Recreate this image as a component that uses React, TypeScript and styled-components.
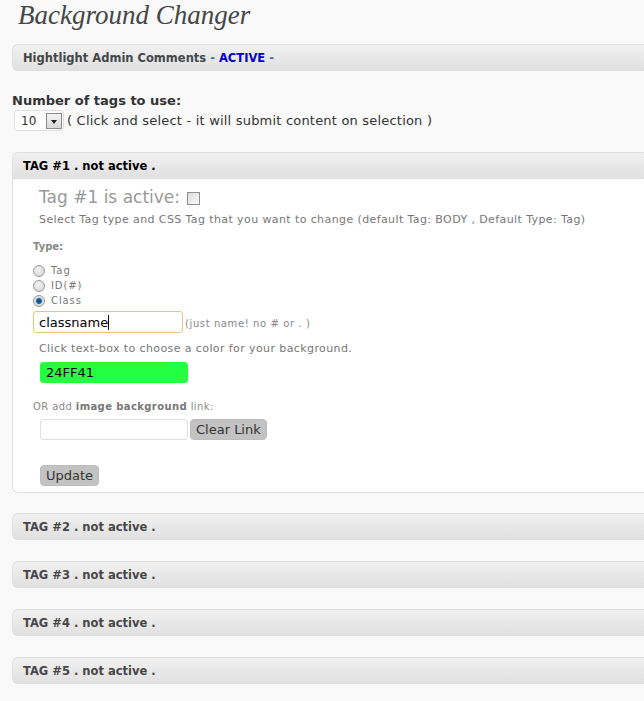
import React from "react";
import styled, { createGlobalStyle } from "styled-components";

const Global = createGlobalStyle`
  html, body { margin: 0; padding: 0; background: #f9f9f9; overflow: hidden; }
  body { font-family: "DejaVu Sans", Verdana, sans-serif; color: #333; }
`;

const Page = styled.div`
  padding: 0 0 0 12px;
  width: 660px;
`;

const Title = styled.h2`
  margin: 0;
  padding: 0 0 0 6px;
  height: 44px;
  box-sizing: border-box;
  font-family: "Liberation Serif", "Times New Roman", serif;
  font-style: italic;
  font-weight: normal;
  font-size: 27px;
  line-height: 30px;
  color: #464646;
`;

const Bar = styled.div<{ $open?: boolean }>`
  height: 27px;
  box-sizing: border-box;
  border: 1px solid #dfdfdf;
  border-right: none;
  border-radius: ${(p) => (p.$open ? "6px 0 0 0" : "6px 0 0 6px")};
  background: linear-gradient(to bottom, #f1f1f1, #e0e0e0);
  display: flex;
  align-items: center;
  padding-left: 10px;
  font-family: "DejaVu Sans", sans-serif;
  font-weight: bold;
  font-size: 11.5px;
  color: ${(p) => (p.$open ? "#000" : "#464646")};
`;

const Blue = styled.span<{ $strong?: boolean }>`
  color: ${(p) => (p.$strong ? "#0000cc" : "#3b6fb6")};
  white-space: pre;
`;

const CountLabel = styled.div`
  margin-top: 22px;
  font-weight: bold;
  font-size: 13px;
  line-height: 16px;
  color: #333;
`;

const CountRow = styled.div`
  display: flex;
  align-items: center;
  gap: 3px;
  margin-top: 1px;
  padding-left: 2px;
  font-size: 13px;
  letter-spacing: 0.2px;
  color: #333;
  height: 21px;
`;

const Select = styled.div`
  width: 50px;
  height: 21px;
  box-sizing: border-box;
  border: 1px solid #dfdfdf;
  border-radius: 3px;
  background: #fff;
  display: flex;
  align-items: center;
  justify-content: space-between;
  padding: 0 1px 0 6px;
  font-size: 12px;
  letter-spacing: 0;
  color: #333;
`;

const Arrow = styled.span`
  width: 16px;
  height: 16px;
  box-sizing: border-box;
  border: 1px solid #8a8a8a;
  background: linear-gradient(to bottom, #f4f4f4, #d8d8d8);
  display: flex;
  align-items: center;
  justify-content: center;
  &::after {
    content: "";
    border-left: 3px solid transparent;
    border-right: 3px solid transparent;
    border-top: 4px solid #222;
    margin-top: 2px;
  }
`;

const Postbox = styled.div`
  margin-top: 21px;
`;

const Body = styled.div`
  background: #fff;
  border: 1px solid #dfdfdf;
  border-top: none;
  border-right: none;
  border-radius: 0 0 0 6px;
  padding: 6px 0 6px 20px;
  height: 314px;
  box-sizing: border-box;
`;

const ActiveLine = styled.div`
  display: flex;
  align-items: center;
  gap: 7px;
  padding-left: 6px;
  font-size: 17px;
  line-height: 24px;
  color: #999;
`;

const Check = styled.span`
  width: 13px;
  height: 13px;
  box-sizing: border-box;
  border: 1px solid #8f8f8f;
  background: linear-gradient(135deg, #dcdcdc, #fafafa);
  margin-top: 2px;
`;

const Hint = styled.div<{ $top?: number }>`
  padding-left: 6px;
  margin-top: ${(p) => p.$top ?? 0}px;
  font-size: 11px;
  letter-spacing: 0.4px;
  line-height: 14px;
  color: #777;
`;

const Small = styled.div<{ $top?: number; $bold?: boolean; $spacing?: number }>`
  margin-top: ${(p) => p.$top ?? 0}px;
  font-size: 10px;
  line-height: 13px;
  letter-spacing: ${(p) => p.$spacing ?? 0.4}px;
  font-weight: ${(p) => (p.$bold ? "bold" : "normal")};
  color: #888;
  b { color: #777; }
`;

const Radios = styled.div`
  margin-top: 10px;
  display: flex;
  flex-direction: column;
`;

const RadioRow = styled.label`
  display: flex;
  align-items: center;
  gap: 6px;
  height: 15px;
  font-size: 10px;
  letter-spacing: 0.9px;
  color: #777;
`;

const Radio = styled.span<{ $on?: boolean }>`
  width: 12px;
  height: 12px;
  box-sizing: border-box;
  border-radius: 50%;
  border: 1px solid #9a9a9a;
  background: ${(p) =>
    p.$on
      ? "radial-gradient(circle, #0a3d6b 0, #1f6ca8 2.5px, #cfd8df 3.5px, #eee 6px)"
      : "radial-gradient(circle at 40% 35%, #f4f4f4, #cfcfcf)"};
`;

const InputRow = styled.div<{ $top?: number; $indent?: number }>`
  display: flex;
  align-items: center;
  gap: 2px;
  margin-top: ${(p) => p.$top ?? 0}px;
  padding-left: ${(p) => p.$indent ?? 0}px;
`;

const Field = styled.div<{ $focus?: boolean; $bg?: string }>`
  width: ${(p) => (p.$focus ? 150 : 148)}px;
  height: ${(p) => (p.$focus ? 22 : 21)}px;
  box-sizing: border-box;
  border: 1px solid ${(p) => (p.$focus ? "#e2c97a" : p.$bg ? p.$bg : "#dfdfdf")};
  border-radius: 3px;
  background: ${(p) => p.$bg ?? "#fff"};
  display: flex;
  align-items: center;
  padding-left: 5px;
  font-size: 13px;
  color: #000;
`;

const Caret = styled.span`
  display: inline-block;
  width: 1px;
  height: 15px;
  background: #000;
`;

const Button = styled.div`
  height: 21px;
  box-sizing: border-box;
  padding: 0 5px;
  border-radius: 4px;
  background: #c2c2c2;
  border: 1px solid #bdbdbd;
  display: flex;
  align-items: center;
  font-size: 13px;
  color: #333;
`;

const Sections = styled.div`
  margin-top: 20px;
  display: flex;
  flex-direction: column;
  gap: 21px;
`;

export default function App() {
  return (
    <Page>
      <Global />
      <Title>Background Changer</Title>
      <Bar>
        Hightlight Admin Comments<Blue> - </Blue>
        <Blue $strong>ACTIVE</Blue>
        <Blue> -</Blue>
      </Bar>
      <CountLabel>Number of tags to use:</CountLabel>
      <CountRow>
        <Select>
          10 <Arrow />
        </Select>
        <span>( Click and select - it will submit content on selection )</span>
      </CountRow>
      <Postbox>
        <Bar $open>TAG #1 . not active .</Bar>
        <Body>
          <ActiveLine>
            Tag #1 is active: <Check />
          </ActiveLine>
          <Hint $top={4}>
            Select Tag type and CSS Tag that you want to change (default Tag: BODY , Default Type: Tag)
          </Hint>
          <Small $top={13} $bold $spacing={0}>
            Type:
          </Small>
          <Radios>
            <RadioRow>
              <Radio /> Tag
            </RadioRow>
            <RadioRow>
              <Radio /> ID(#)
            </RadioRow>
            <RadioRow>
              <Radio $on /> Class
            </RadioRow>
          </Radios>
          <InputRow $top={3}>
            <Field $focus>
              classname
              <Caret />
            </Field>
            <Small $top={2} $spacing={0.6}>
              (just name! no # or . )
            </Small>
          </InputRow>
          <Hint $top={9}>Click text-box to choose a color for your background.</Hint>
          <InputRow $top={6} $indent={7}>
            <Field $bg="#24ff41">24FF41</Field>
          </InputRow>
          <Small $top={17}>
            OR add <b>image background</b> link:
          </Small>
          <InputRow $top={6} $indent={7}>
            <Field />
            <Button>Clear Link</Button>
          </InputRow>
          <InputRow $top={25} $indent={7}>
            <Button>Update</Button>
          </InputRow>
        </Body>
      </Postbox>
      <Sections>
        {[2, 3, 4, 5].map((n) => (
          <Bar key={n}>TAG #{n} . not active .</Bar>
        ))}
      </Sections>
    </Page>
  );
}
